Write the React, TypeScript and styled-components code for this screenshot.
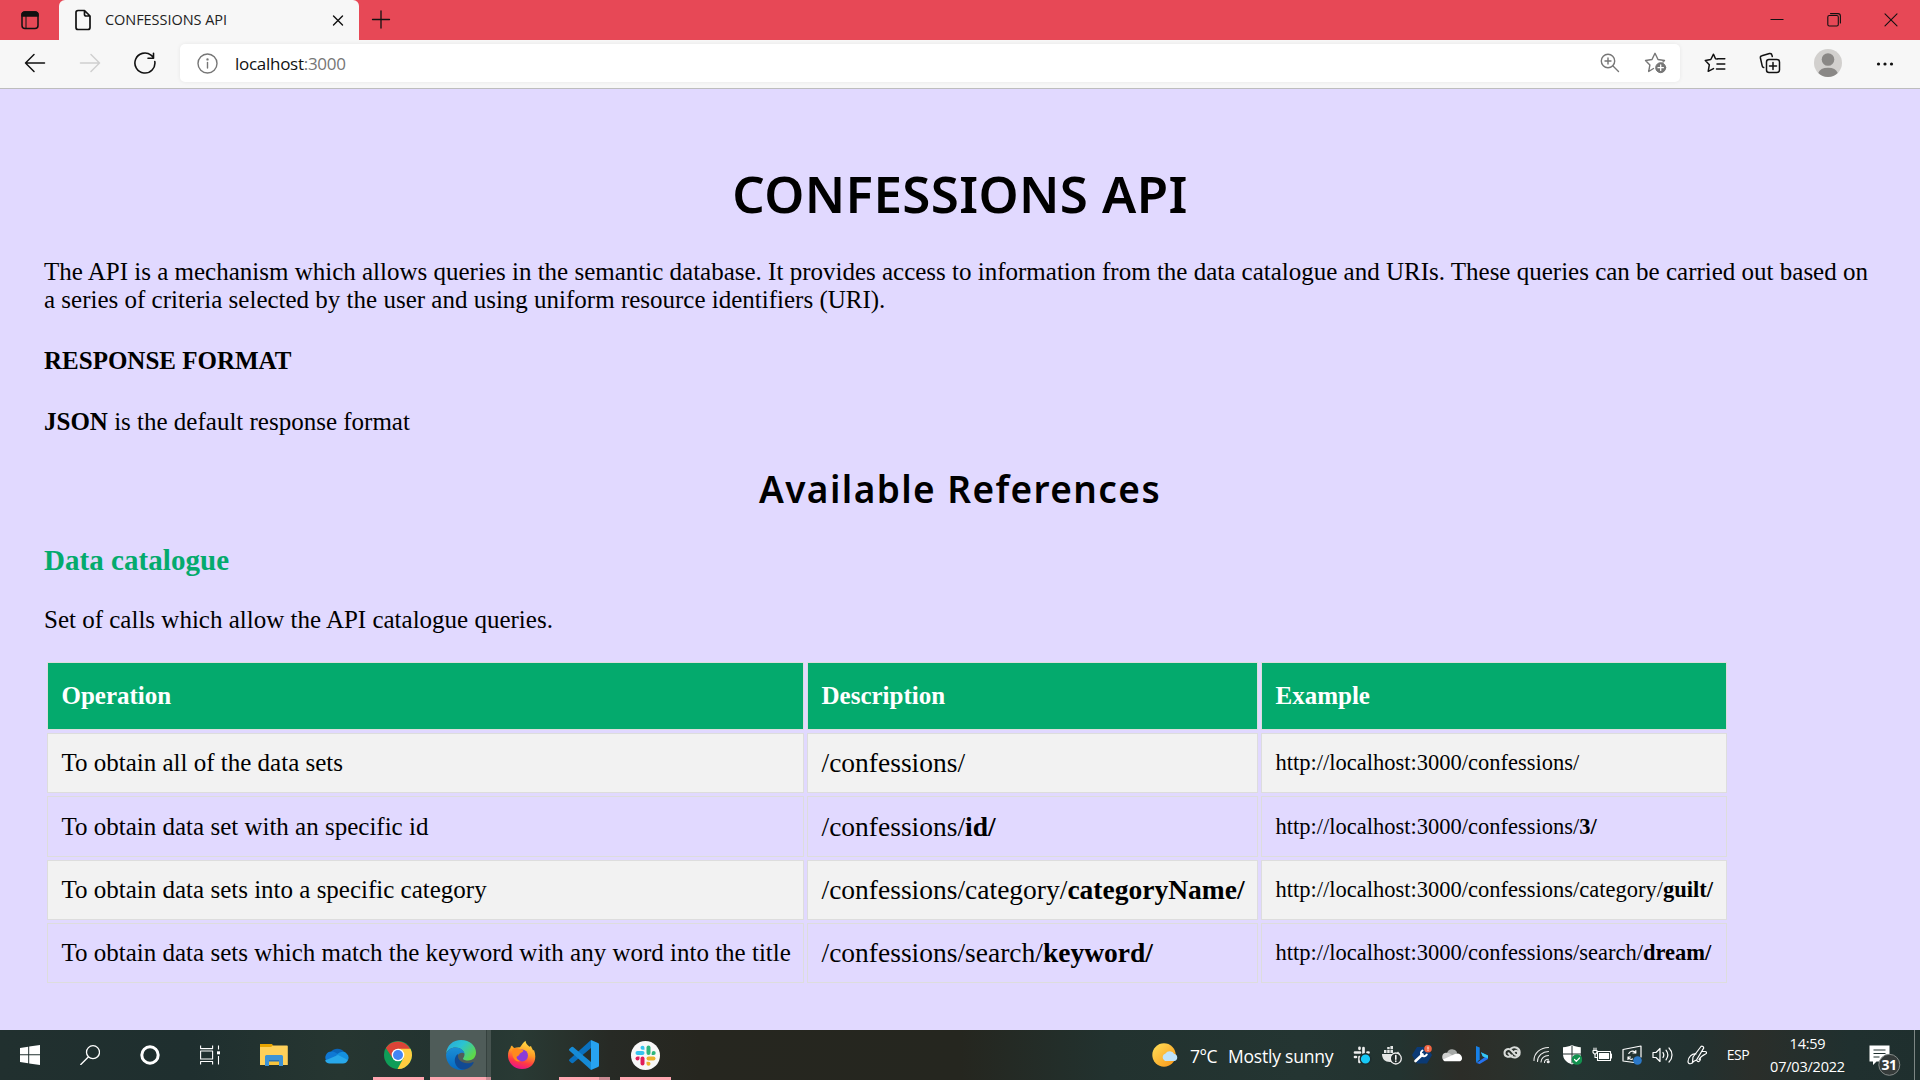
import React from "react";
import styled, { createGlobalStyle } from "styled-components";

const GlobalStyle = createGlobalStyle`
  * { box-sizing: border-box; }
  body { margin: 0; overflow: hidden; background: #e1d9ff; }
`;

const ui = `"Open Sans", "Noto Sans", sans-serif`;
const serif = `"Liberation Serif", "Times New Roman", serif`;

const Screen = styled.div`
  width: 1920px;
  height: 1080px;
  display: flex;
  flex-direction: column;
  overflow: hidden;
`;

/* ---------- browser chrome ---------- */
const TitleBar = styled.div`
  height: 40px;
  flex: none;
  display: flex;
  align-items: stretch;
  background: #e74856;
`;
const Slot = styled.div<{ $w: number }>`
  width: ${(p) => p.$w}px;
  flex: none;
  display: flex;
  align-items: center;
  justify-content: center;
  svg { display: block; flex: none; }
`;
const Tab = styled.div`
  width: 300px;
  height: 40px;
  flex: none;
  display: flex;
  align-items: center;
  padding: 0 13px 0 16px;
  border-radius: 6px 6px 0 0;
  background: #f7f7f7;
`;
const TabTitle = styled.div`
  flex: 1;
  margin-left: 14px;
  font: 400 14.5px/20px ${ui};
  letter-spacing: -0.05px;
  color: #222;
  white-space: nowrap;
`;
const Spacer = styled.div`flex: 1;`;
const Toolbar = styled.div`
  height: 49px;
  flex: none;
  display: flex;
  align-items: center;
  padding: 0 0 2px 7px;
  background: #f7f7f7;
  border-bottom: 1px solid #bdbdbd;
`;
const Gap = styled.div<{ $w: number }>`
  width: ${(p) => p.$w}px;
  flex: none;
`;
const AddressBar = styled.div`
  width: 1500px;
  height: 38px;
  flex: none;
  display: flex;
  align-items: center;
  padding: 0 1px 0 17px;
  border-radius: 5px;
  background: #fff;
  box-shadow: 0 0 4px rgba(0, 0, 0, 0.07);
`;
const Url = styled.div`
  flex: 1;
  margin-left: 17px;
  padding-top: 1px;
  font: 400 17px/24px ${ui};
  letter-spacing: -0.28px;
  color: #111;
  span { color: #767676; }
`;

/* ---------- page ---------- */
const Page = styled.main`
  height: 941px;
  flex: none;
  padding: 74px 44px 0;
  background: #e1d9ff;
  color: #000;
  font-family: ${serif};
`;
const Title = styled.h1`
  margin: 0 0 35px;
  font: 600 51px/60px "Noto Sans", "Open Sans", sans-serif;
  letter-spacing: 0.4px;
  text-align: center;
`;
const Subtitle = styled.h2`
  margin: 31px 0 33px;
  font: 600 37px/44px "Noto Sans", "Open Sans", sans-serif;
  letter-spacing: 1.4px;
  text-align: center;
`;
const Section = styled.h3`
  margin: 0 0 29px;
  font: 700 29px/33px ${serif};
  letter-spacing: 0.05px;
  color: #04aa6d;
`;
const Text = styled.p<{ $gap: number }>`
  margin: 0 0 ${(p) => p.$gap}px;
  font: 400 25px/28px ${serif};
`;
const Table = styled.div`
  display: grid;
  grid-template-columns: 757px 451px 466px;
  grid-template-rows: 68px 60px 61px 60px 60px;
  gap: 3px;
  margin-left: 3px;
`;
const Cell = styled.div<{ $size: number; $even?: boolean; $head?: boolean }>`
  display: flex;
  align-items: center;
  padding: 0 0 0 13.5px;
  border: 1px solid #ddd;
  font-size: ${(p) => p.$size}px;
  white-space: pre;
  background: ${(p) => (p.$head ? "#04aa6d" : p.$even ? "#f2f2f2" : "transparent")};
  color: ${(p) => (p.$head ? "#fff" : "#000")};
  font-weight: ${(p) => (p.$head ? 700 : 400)};
`;

/* ---------- taskbar ---------- */
const Taskbar = styled.footer`
  height: 50px;
  flex: none;
  display: flex;
  align-items: stretch;
  background: linear-gradient(90deg, #21302f 0, #1f2f2f 190px, #263631 340px, #233330 440px, #293a34 520px, #272a25 610px, #26261f 700px, #25261f 960px, #22322f 1110px, #243532 1300px, #233330 1400px, #2c2d28 1460px, #2b302b 1500px, #243532 1570px, #223130 1690px, #2a2e2a 1755px, #20302f 1850px, #1f2f2e 1920px);
`;
const AppSlot = styled.div<{ $w: number; $active?: boolean }>`
  width: ${(p) => p.$w}px;
  flex: none;
  display: flex;
  flex-direction: column;
  align-items: center;
  justify-content: flex-end;
  svg { display: block; }
  background: ${(p) =>
    p.$active ? "linear-gradient(90deg, #4f5c59 0 56px, #35413e 56px 57px, #46534f 57px)" : "none"};
`;
const IconArea = styled.div`
  flex: 1;
  display: flex;
  align-items: center;
  justify-content: center;
  padding-top: 3px;
`;
const Underline = styled.div<{ $w: number; $split?: number }>`
  width: ${(p) => p.$w}px;
  height: 3px;
  background: ${(p) =>
    p.$split ? `linear-gradient(90deg, #ffa6b0 0 ${p.$split}px, #c98a92 ${p.$split}px)` : p.$w ? "#ffa6b0" : "none"};
`;
const Weather = styled.div`
  width: 196px;
  flex: none;
  display: flex;
  align-items: center;
  color: #fff;
  font: 400 17.5px/24px ${ui};
  white-space: nowrap;
`;
const Temp = styled.span`margin: 1px 11px 0 12px; letter-spacing: -0.5px;`;
const Sky = styled.span`margin-top: 1px; letter-spacing: -0.22px;`;
const Language = styled.div`
  width: 44px;
  flex: none;
  text-align: center;
  font: 400 14px/50px ${ui};
  letter-spacing: -0.4px;
  color: #fff;
`;
const Clock = styled.div`
  width: 96px;
  flex: none;
  text-align: center;
  font: 400 14.5px/23px ${ui};
  letter-spacing: -0.22px;
  color: #fff;
  padding: 2px 1px 0 0;
`;
const Desktop = styled.div`
  width: 6px;
  flex: none;
  border-left: 1px solid #7d8684;
`;

type IconProps = { w: number; h: number; children: React.ReactNode; color?: string; sw?: number };
const Icon = ({ w, h, children, color = "#111", sw = 1.4 }: IconProps) => (
  <svg width={w} height={h} viewBox={`0 0 ${w} ${h}`} fill="none" stroke={color} strokeWidth={sw} strokeLinecap="round" strokeLinejoin="round">
    {children}
  </svg>
);

const Browser = () => (
  <>
    <TitleBar>
      <Slot $w={59}>
        <Icon w={20} h={20} sw={1.5}>
          <rect x="2" y="2" width="16" height="16.500" rx="3" />
          <path d="M2 6V5a3 3 0 0 1 3-3h10a3 3 0 0 1 3 3v1z" fill="#111" />
          <path d="M6 6v12" strokeWidth="1" />
        </Icon>
      </Slot>
      <Tab>
        <Icon w={16} h={22} sw={1.7}>
          <path d="M3 1.500h6.500L15 7v11.500a2 2 0 0 1-2 2H3a2 2 0 0 1-2-2v-15a2 2 0 0 1 2-2zM9.500 1.700V5.500A1.500 1.500 0 0 0 11 7h3.800" />
        </Icon>
        <TabTitle>CONFESSIONS API</TabTitle>
        <Icon w={16} h={16} sw={1.4}><path d="M3.500 4l9 9M12.500 4l-9 9" /></Icon>
      </Tab>
      <Slot $w={44}>
        <Icon w={20} h={20} sw={1.3}><path d="M1.500 9.500h17M10 1v17" /></Icon>
      </Slot>
      <Spacer />
      <Slot $w={59}><Icon w={14} h={14} sw={1}><path d="M.5 6.500h13" strokeLinecap="butt" /></Icon></Slot>
      <Slot $w={56}>
        <Icon w={14} h={14} sw={1.1}>
          <rect x=".8" y="2.500" width="10.500" height="10.500" rx="1.500" />
          <path d="M3.500.6h7.500a2.400 2.400 0 0 1 2.400 2.400v7" />
        </Icon>
      </Slot>
      <Slot $w={58}><Icon w={14} h={14} sw={1.1}><path d="M1 .8l12 12M13 .8l-12 12" /></Icon></Slot>
    </TitleBar>
    <Toolbar>
      <Slot $w={56}><Icon w={22} h={20} sw={1.5}><path d="M20.500 10H1.500M10 1.500L1.500 10l8.500 8.500" /></Icon></Slot>
      <Slot $w={54}><Icon w={22} h={20} color="#cfcfcf" sw={1.5}><path d="M1.500 10h19M12 1.500l8.500 8.500-8.500 8.500" /></Icon></Slot>
      <Slot $w={56}>
        <Icon w={22} h={22} sw={1.6}><path d="M20.800 9.500A10 10 0 1 1 17 3.100l2.500 2.200M19.500 1.200v5h-5.500" /></Icon>
      </Slot>
      <Gap $w={7} />
      <AddressBar>
        <Icon w={21} h={21} color="#767676" sw={1.4}>
          <circle cx="10.500" cy="10.500" r="9.500" /><path d="M10.500 9.500v5.500" /><circle cx="10.500" cy="6.400" r=".5" fill="#767676" />
        </Icon>
        <Url>localhost<span>:3000</span></Url>
        <Slot $w={46}>
          <Icon w={20} h={20} color="#767676" sw={1.4}>
            <circle cx="8" cy="8" r="6.700" /><path d="M13 13l5.500 5.500M5 8h6M8 5v6" />
          </Icon>
        </Slot>
        <Slot $w={46}>
          <Icon w={24} h={22} color="#767676" sw={1.4}>
            <path d="M9.500 16.500l-4.800 3 1.200-6.600L1.500 8.500l6.500-1 3-6.200 3 6.200 6.500 1-1.500 1.500" />
            <circle cx="16.700" cy="15.700" r="5" fill="#767676" strokeWidth="1" />
            <path d="M14 15.700h5.400M16.700 13v5.400" stroke="#fff" strokeWidth="1.300" />
          </Icon>
        </Slot>
      </AddressBar>
      <Slot $w={70}>
        <Icon w={22} h={22} sw={1.5}>
          <path d="M13.500 7l-2-.3L9.500 2.200 6.800 7.500l-5.500 1 4 4.300-1.100 6.500 5.300-2.700M13.500 6.700h7.300M13 12h7.800M12.500 17h8.300" />
        </Icon>
      </Slot>
      <Slot $w={40}>
        <Icon w={22} h={22} sw={1.5}>
          <rect x="7.500" y="7.500" width="13" height="13" rx="2.500" />
          <path d="M14 10.500v7M10.500 14h7M4.700 15.500a2 2 0 0 1-1.500-1.700L1.400 6a2 2 0 0 1 1.500-2.300L10.500 1.500a2 2 0 0 1 2.400 1.500l.4 1.500" />
        </Icon>
      </Slot>
      <Slot $w={76}>
        <Icon w={28} h={28} color="none">
          <circle cx="14" cy="14" r="14" fill="#d2d0ce" />
          <circle cx="14" cy="10.500" r="6.300" fill="#8a8886" />
          <path d="M4.300 24A10 7 0 0 1 23.700 24 14 14 0 0 1 4.300 24z" fill="#8a8886" />
        </Icon>
      </Slot>
      <Slot $w={38}>
        <Icon w={18} h={6} color="none">
          <circle cx="2.500" cy="4" r="1.600" fill="#111" /><circle cx="9" cy="4" r="1.600" fill="#111" /><circle cx="15.500" cy="4" r="1.600" fill="#111" />
        </Icon>
      </Slot>
    </Toolbar>
  </>
);

const rows = [
  { op: "To obtain all of the data sets", path: "/confessions/", bold: "", ex: "http://localhost:3000/confessions/", exBold: "" },
  { op: "To obtain data set with an specific id", path: "/confessions/", bold: "id/", ex: "http://localhost:3000/confessions/", exBold: "3/" },
  { op: "To obtain data sets into a specific category", path: "/confessions/category/", bold: "categoryName/", ex: "http://localhost:3000/confessions/category/", exBold: "guilt/" },
  { op: "To obtain data sets which match the keyword with any word into the title", path: "/confessions/search/", bold: "keyword/", ex: "http://localhost:3000/confessions/search/", exBold: "dream/" },
];

const Content = () => (
  <Page>
    <Title>CONFESSIONS API</Title>
    <Text $gap={33}>
      The API is a mechanism which allows queries in the semantic database. It provides access to information from the data catalogue and URIs. These queries can be carried out based on a series of criteria selected by the user and using uniform resource identifiers (URI).
    </Text>
    <Text $gap={33}><b>RESPONSE FORMAT</b></Text>
    <Text $gap={31}><b>JSON</b> is the default response format</Text>
    <Subtitle>Available References</Subtitle>
    <Section>Data catalogue</Section>
    <Text $gap={28}>Set of calls which allow the API catalogue queries.</Text>
    <Table>
      {["Operation", "Description", "Example"].map((h) => <Cell key={h} $head $size={25}>{h}</Cell>)}
      {rows.map((r, i) => (
        <React.Fragment key={r.op}>
          <Cell $size={25} $even={i % 2 === 0}>{r.op}</Cell>
          <Cell $size={27.5} $even={i % 2 === 0}>{r.path}<b>{r.bold}</b></Cell>
          <Cell $size={22.5} $even={i % 2 === 0}>{r.ex}<b>{r.exBold}</b></Cell>
        </React.Fragment>
      ))}
    </Table>
  </Page>
);

type AppButtonProps = { w: number; line?: number; split?: number; active?: boolean; children: React.ReactNode };
const AppButton = ({ w, line = 0, split, active, children }: AppButtonProps) => (
  <AppSlot $w={w} $active={active}>
    <IconArea>{children}</IconArea>
    <Underline $w={line} $split={split} />
  </AppSlot>
);

const TaskbarView = () => (
  <Taskbar>
    <AppButton w={60}>
      <Icon w={20} h={20} color="none">
        <path d="M0 3l8.200-1.300V9.300H0zM9.200 1.500L20 0v9.300H9.200zM0 10.300h8.200v8L0 17zM9.200 10.300H20V20L9.200 18.500z" fill="#fff" />
      </Icon>
    </AppButton>
    <AppButton w={60}><Icon w={20} h={20} color="#fff" sw={1.3}><circle cx="13" cy="7.200" r="6.500" /><path d="M8.300 12L.8 19.500" /></Icon></AppButton>
    <AppButton w={60}><Icon w={20} h={20} color="#fff" sw={3}><circle cx="10" cy="10" r="8.200" /></Icon></AppButton>
    <AppButton w={60}>
      <Icon w={20} h={20} color="#fff" sw={1.1}>
        <path d="M.6.600v3h12v-3M.6 19.500v-3h12v3M18.500.600v4M18.500 11v8.500" strokeLinecap="butt" /><rect x=".6" y="6" width="12" height="8" /><path d="M17 6.300h3v3h-3z" fill="#fff" stroke="none" />
      </Icon>
    </AppButton>
    <AppButton w={67}>
      <Icon w={28} h={24} color="none">
        <path d="M0 1h12l2 3H0z" fill="#e8a400" /><path d="M0 4h11l2-1.500h14a.8.8 0 0 1 .8.8V22H0z" fill="#ffd05a" />
        <path d="M5 23V13.500A1.500 1.500 0 0 1 6.500 12h15a1.500 1.500 0 0 1 1.500 1.500V23h-4v-6H9v6z" fill="#3d93d6" /><path d="M9 17h10v5H9z" fill="#f8c43c" /><path d="M9 17h10v1.500H9z" fill="#2a72b5" />
      </Icon>
    </AppButton>
    <AppButton w={57}>
      <Icon w={26} h={18} color="none">
        <path d="M8 6A8 8 0 0 1 21 6l-5 7z" fill="#0a64b8" />
        <path d="M3.500 15A6 6 0 0 1 8.500 5.500c3 0 5 1.500 7 3l-3 7z" fill="#0f78d4" />
        <path d="M13 9.500C17 5 22 5 23.500 7.500A5.500 5.500 0 0 1 25 14l-8-1z" fill="#1490df" />
        <path d="M2 14.500L15 9l10 5c-1 2.500-3 3.500-5 3.500H6.500c-2 0-3.500-1-4.500-3z" fill="#28a8ea" />
      </Icon>
    </AppButton>
    <Gap $w={2} />
    <AppButton w={64} line={51}>
      <Icon w={28} h={28} color="none">
        <circle cx="14" cy="14" r="14" fill="#0f9d58" />
        <path d="M14 14L8.500 17 1.900 7A14 14 0 0 1 26.100 7.700z" fill="#db4437" />
        <path d="M14 7.700h12.500A14 14 0 0 1 13.500 28l6-11z" fill="#ffcd40" />
        <circle cx="14" cy="14" r="6.300" fill="#fff" /><circle cx="14" cy="14" r="5" fill="#4285f4" />
      </Icon>
    </AppButton>
    <AppButton w={61} line={61} split={56} active>
      <svg width="30" height="30" viewBox="0 0 30 30">
        <defs>
          <linearGradient id="edgeTop" x1="0" y1="0" x2="1" y2=".6"><stop offset="0" stopColor="#2aa5dc" /><stop offset=".5" stopColor="#2bc3d2" /><stop offset="1" stopColor="#5ed749" /></linearGradient>
          <linearGradient id="edgeSide" x1="0" y1="0" x2="0" y2="1"><stop offset="0" stopColor="#1b8fd6" /><stop offset="1" stopColor="#0669c0" /></linearGradient>
        </defs>
        <path d="M0 14C1 5 7 0 15 0c9 0 15 6 15 12.500 0 5-3.500 8-8 8-4 0-5-1.200-5-2s1.500-1.500 1.500-4c0-3.500-4-7-9-7C5 7.500 1.500 10 0 14z" fill="url(#edgeTop)" />
        <path d="M0 14.500C1.500 10 5 7.500 9.500 7.500c5 0 9 3 9 6.500-1-2-6-2-7.500 3-1.500 6 3 12.500 8 12.500-1 .4-2.500.5-4 .5C6.500 30 0 23.500 0 14.500z" fill="url(#edgeSide)" />
        <path d="M12 14c-3 2-4 6-2.500 10 1.500 3.500 5 6 9 5.500 4.500-.8 7.500-3.500 9-6.500.4-.7-.2-1.200-1-.7-2 1-4 1.200-5.500 1C16 22.600 11 20 12 14z" fill="#114a93" />
      </svg>
    </AppButton>
    <AppButton w={62}>
      <svg width="28" height="30" viewBox="0 0 28 30">
        <defs>
          <linearGradient id="foxBody" x1=".7" y1="0" x2=".4" y2="1"><stop offset="0" stopColor="#ffe04a" /><stop offset=".45" stopColor="#ff9a24" /><stop offset=".75" stopColor="#ff3b43" /><stop offset="1" stopColor="#e8128c" /></linearGradient>
        </defs>
        <path d="M4 5.500c.6 1 1.400 2 2.300 2.600C8 7.300 10 7 12 7.200 14 5 15 2.500 17.500.8c.3 2.500 1.500 4 4 6L23 6c.5 2 1.500 2.500 2 4.500l1-.5C29.500 19 26 29 14 29 6 29 0 23 0 15.500 0 12 1 9.500 2.500 8c0-1 .5-2 1.500-2.500z" fill="url(#foxBody)" />
        <circle cx="14" cy="15.500" r="6" fill="#8a3bd8" />
        <path d="M4.500 9c2-1.500 5-1.500 7 0l4 1.500c-.5 2-3.500 2.200-4 3.500 0 2-3 2-3 3.500C9 19.500 11 21 13 21c-6 2-10-4-8.500-12z" fill="#ff8a1c" />
      </svg>
    </AppButton>
    <AppButton w={62} line={51} split={40}>
      <Icon w={30} h={30} color="none">
        <path d="M22 0v8L3.800 23.200 2.500 23 .3 21c-.4-.4-.4-1 0-1.500z" fill="#0a70bd" />
        <path d="M22 30v-8L3.800 6.800 2.500 7 .3 9c-.4.400-.4 1 0 1.500z" fill="#168bd6" />
        <path d="M22 0l7 3a1.500 1.500 0 0 1 1 1.400v21.200a1.500 1.500 0 0 1-1 1.400l-7 3z" fill="#27a2f0" />
      </Icon>
    </AppButton>
    <AppButton w={61} line={51}>
      <Icon w={29} h={29} color="none">
        <circle cx="14.500" cy="14.500" r="14.500" fill="#f8f8f8" />
        <g fill="#36c5f0"><rect x="4.500" y="10" width="9" height="4" rx="2" /><path d="M9.500 6.700a2 2 0 1 1 4 0v2h-2a2 2 0 0 1-2-2z" /></g>
        <g fill="#2eb67d"><rect x="15.500" y="4.500" width="4" height="9.500" rx="2" /><path d="M20.700 14v-2a2 2 0 1 1 2 2z" /></g>
        <g fill="#ecb22e"><rect x="15.500" y="15.500" width="9" height="4" rx="2" /><path d="M15.500 20.700h2a2 2 0 1 1-2 2z" /></g>
        <g fill="#e01e5a"><rect x="9.500" y="15.500" width="4" height="9" rx="2" /><path d="M8.500 15.500v2a2 2 0 1 1-2-2z" /></g>
      </Icon>
    </AppButton>
    <Spacer />
    <Weather>
      <svg width="26" height="24" viewBox="0 0 26 24">
        <defs><linearGradient id="sun" x1="0" y1="0" x2="1" y2="1"><stop offset="0" stopColor="#ffe05a" /><stop offset="1" stopColor="#f99416" /></linearGradient></defs>
        <circle cx="12" cy="12" r="11.700" fill="url(#sun)" />
        <path d="M13 18a4 4 0 0 1 .5-7.500 5 5 0 0 1 8.700.5 3.600 3.600 0 0 1 .5 7z" fill="#bfe3fa" />
      </svg>
      <Temp>7°C</Temp><Sky>Mostly sunny</Sky>
    </Weather>
    <Slot $w={28}>
      <Icon w={20} h={20} color="none">
        <g stroke="#eee" strokeWidth="2.700"><path d="M3 7.500h5M7.500 2.800v1M11.500 3v5M15.500 7.500h1M3 12h1M7.500 12v5M12 12h5M12 16.500v.5" /></g>
        <circle cx="13.500" cy="14" r="5.300" fill="#17c9f7" stroke="#1d2b2c" />
      </Icon>
    </Slot>
    <Slot $w={31}>
      <Icon w={22} h={20} color="none">
        <path d="M1 9h14l2-2.500L19 9c-1 5-5 8-10 8C4 17 1 14 1 9zM3 5h2.500v3H3zM6.200 5h2.500v3H6.200zM9.400 5H12v3H9.400zM6.200 2h2.500v2.300H6.200zM9.400 1H12v3.300H9.400z" fill="#e4e7e6" />
        <circle cx="14.800" cy="13.500" r="5.500" fill="#26312f" stroke="#eee" strokeWidth="1.300" /><path d="M14.800 10.500v3.800M14.800 16v.4" stroke="#fff" strokeWidth="1.500" />
      </Icon>
    </Slot>
    <Slot $w={30}>
      <Icon w={20} h={20} color="none">
        <path d="M5 2h10l5 8-5 8.500H5L0 10z" fill="#0b3a75" />
        <path d="M3.500 16l7-6.500" stroke="#fff" strokeWidth="2.600" /><path d="M10.500 5.500C8.500 7 8.500 9 9.800 10.300c1.500 1.400 3.700 1.200 5-.8" stroke="#fff" strokeWidth="2" />
        <circle cx="16" cy="3.800" r="3.800" fill="#f26542" /><path d="M16 2v2.200M16 5.500v.1" stroke="#fff" strokeWidth=".9" />
      </Icon>
    </Slot>
    <Slot $w={30}>
      <Icon w={20} h={14} color="none">
        <path d="M5 5a5.500 5.500 0 0 1 10-1l-1 6H4z" fill="#a5a8a6" /><path d="M3 13a4.300 4.300 0 0 1 .5-8.200c3-.6 5 1 7 2.700L8 13z" fill="#cfd0cf" /><path d="M1 11.500L13 6c4-2 7.500 1.500 7 5-.4 1.500-1.500 2.300-3 2.300H3.500c-1 0-2-.5-2.500-1.800z" fill="#fff" />
      </Icon>
    </Slot>
    <Slot $w={30}>
      <Icon w={14} h={18} color="none">
        <path d="M1 0l3.700 1.500v11.800L1.500 17 1 15z" fill="#1680e8" /><path d="M1.500 17l3.200 1L13 13V9.500L6 6.200l1.700 4 2 1z" fill="#2672ef" /><path d="M6 6.200L13 9.500v2.800L9.700 11.200 7.700 10.200z" fill="#35c8ef" />
      </Icon>
    </Slot>
    <Slot $w={30}>
      <Icon w={18} h={18} color="#d9dcda" sw={2}>
        <path d="M9 9.500C7 11.500 1.500 11.500 1.500 7c0-4 4.500-5 7-2.500l3.500 4c2 1.500 3.500-.5 3-2C14.200 4.200 12 4.500 11 6M8 2.500c3.500-2.800 8.700-.5 8.700 4 0 5-6.200 6.500-9.200 3L5.500 7.200" />
      </Icon>
    </Slot>
    <Slot $w={30}>
      <Icon w={18} h={18} color="#eee" sw={1.1}>
        <path d="M1 14.500C1 7 7.500 1.500 15.500 1.500M4.500 15.500c0-5.500 5-10 11-10M8 16c0-3.500 3.300-6.500 7.500-6.500M11.500 16.500c0-1.800 1.500-3.300 4-3.300" /><circle cx="15.200" cy="15.700" r="1" fill="#fff" />
      </Icon>
    </Slot>
    <Slot $w={30}>
      <Icon w={20} h={20} color="none">
        <path d="M10 0c3 1.500 5.500 2 8.800 2.200V9c0 5-3 8.300-8.800 10.500C4 17.300 1 14 1 9V2.200C4.500 2 7 1.500 10 0z" fill="#fff" />
        <path d="M10 1v17M1 9h18" stroke="#23302f" strokeWidth="1" /><circle cx="15" cy="14.500" r="5.300" fill="#13924f" /><path d="M12.500 14.500l1.800 1.800 3.200-3.300" stroke="#fff" strokeWidth="1.200" />
      </Icon>
    </Slot>
    <Slot $w={30}>
      <Icon w={20} h={16} color="#fff" sw={1.1}>
        <rect x="5.500" y="4.500" width="13" height="9" /><rect x="7.500" y="6.500" width="9" height="5" fill="#fff" /><path d="M19.500 7v4M1 3.500h4v2L3.500 7H2.500L1 5.500zM2 1v2M4 1v2M3 7v3.500h2.500" />
      </Icon>
    </Slot>
    <Slot $w={30}>
      <Icon w={20} h={20} color="#fff" sw={1.2}>
        <path d="M12 17.500L1 16V4.500L19 1v11M6.800 8.500A4 4 0 0 1 13 7l.8 1M13.800 5.500V8H11M6 14.500V12h2.500M6 12c.8 2 3 2.800 4.500 2" /><circle cx="15.500" cy="15.500" r="4.300" fill="#2b78c8" stroke="none" />
      </Icon>
    </Slot>
    <Slot $w={31}>
      <Icon w={22} h={18} color="#fff" sw={1.2}>
        <path d="M1 6.500h3L8 2.500v13L4 11.500H1zM11 6.500c1 1.500 1 3.500 0 5M14 4.200c2.300 3 2.300 6.600 0 9.600M17 2c4 4 4 10 0 14" />
      </Icon>
    </Slot>
    <Slot $w={38}>
      <Icon w={20} h={20} color="#fff" sw={1.2}>
        <path d="M6 12L14 1.500c1-1 3.200.4 2.500 1.900L9.500 15l-4 2zM9 9C5 8 1 12.500 1 16.500c0 3.500 4.500 2.500 5.500 0M14.500 6.500h3.500c2 0 2 2 .5 2.500-2 1-5 2.500-6.500 5.500M9.500 15c1.500 3 3.500 1.500 4-1" />
      </Icon>
    </Slot>
    <Language>ESP</Language>
    <Clock>14:59<br />07/03/2022</Clock>
    <Slot $w={58}>
      <svg width="32" height="41" viewBox="0 -9 32 41">
        <path d="M.5 1.500h20v16h-13L4 21v-3.500H.5z" fill="#fff" />
        <path d="M4.500 6h12M4.500 9.500h12M4.500 13h6" stroke="#20302f" strokeWidth="1.200" />
        <circle cx="20.300" cy="20.800" r="10.500" fill="#353b3a" stroke="#858b89" />
        <text x="20" y="25.800" textAnchor="middle" fill="#fff" fontFamily="Open Sans, sans-serif" fontSize="14" fontWeight="700" letterSpacing="-.6">31</text>
      </svg>
    </Slot>
    <Desktop />
  </Taskbar>
);

export default function App() {
  return (
    <Screen>
      <GlobalStyle />
      <Browser />
      <Content />
      <TaskbarView />
    </Screen>
  );
}
